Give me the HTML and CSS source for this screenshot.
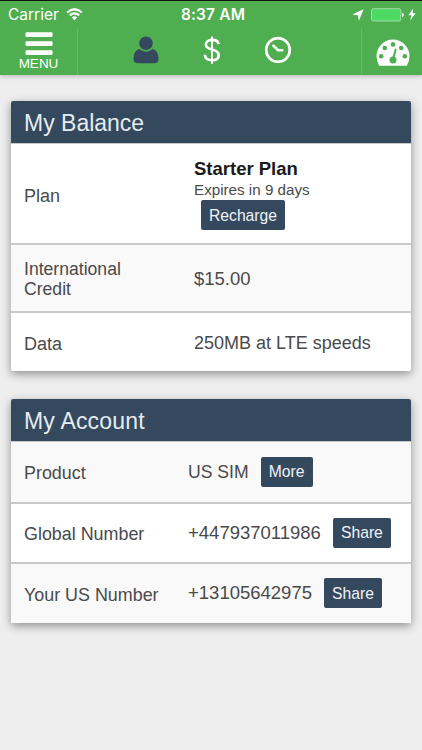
FILE: index.html
```html
<!DOCTYPE html>
<html lang="en">
<head>
    <meta charset="UTF-8">
    <meta name="viewport" content="width=device-width, initial-scale=1.0">
    <title>My Account</title>
    <link rel="stylesheet" href="styles.css">
</head>
<body>
    <header class="top-bar">
        <div class="status-bar">
            <div class="status-left">
                <span class="carrier">Carrier</span>
                <svg class="wifi" width="17" height="13" viewBox="0 0 17 13">
                    <path d="M1.2 4.5 Q8.5 -2 15.8 4.5" fill="none" stroke="#fff" stroke-width="2.2"/>
                    <path d="M3.8 7.4 Q8.5 3.2 13.2 7.4" fill="none" stroke="#fff" stroke-width="2.2"/>
                    <path d="M5.8 9.4 Q8.5 7 11.2 9.4 L8.5 12.2 Z" fill="#fff"/>
                </svg>
            </div>
            <span class="time">8:37 AM</span>
            <div class="status-right">
                <svg width="12" height="12" viewBox="0 0 12 12">
                    <path d="M11.6 .3 L6.9 11.8 L5.8 6.3 L.3 5.4 Z" fill="#fff"/>
                </svg>
                <svg class="battery" width="33" height="14" viewBox="0 0 33 14">
                    <rect x=".5" y=".7" width="29.3" height="12.3" rx="1.8" fill="#4cd964" stroke="#b5e3b9" stroke-width=".8"/>
                    <path d="M31 4.8 Q32.8 5.2 32.8 7 Q32.8 8.8 31 9.2 Z" fill="#fff"/>
                </svg>
                <svg class="bolt" width="8" height="13" viewBox="0 0 8 13">
                    <path d="M5.2 .5 L.3 7.2 H3.4 L2.2 12.5 L7.7 5.3 H4.5 Z" fill="#fff"/>
                </svg>
            </div>
        </div>
        <nav class="nav">
            <a class="menu">
                <svg width="28" height="24" viewBox="0 0 28 24">
                    <rect x=".5" y=".3" width="27" height="4.8" rx="1" fill="#fff"/>
                    <rect x=".5" y="9.3" width="27" height="4.8" rx="1" fill="#fff"/>
                    <rect x=".5" y="18.3" width="27" height="4.8" rx="1" fill="#fff"/>
                </svg>
                <span>MENU</span>
            </a>
            <div class="tabs">
                <a class="tab">
                    <svg width="26" height="28" viewBox="0 0 26 28">
                        <circle cx="13" cy="7.3" r="6.8" fill="#34495e"/>
                        <path d="M6.3 13.1 Q13 18.5 19.7 13.1 Q25.5 14.5 25.5 23 Q25.5 27.3 21 27.3 H5 Q.5 27.3 .5 23 Q.5 14.5 6.3 13.1 Z" fill="#34495e"/>
                    </svg>
                </a>
                <a class="tab">
                    <svg width="18" height="28" viewBox="0 0 18 28">
                        <path d="M15.6 8.2 C15.2 5.2 12.4 3.9 9 3.9 C5.2 3.9 2.9 5.9 2.9 8.6 C2.9 11.7 5.4 12.7 9 13.6 C13 14.6 15.7 15.8 15.7 19.2 C15.7 22.4 13 24.3 9 24.3 C5 24.3 2.1 22.3 1.9 18.8" fill="none" stroke="#fff" stroke-width="2.6"/>
                        <path d="M9 .5 V27.7" fill="none" stroke="#fff" stroke-width="2"/>
                    </svg>
                </a>
                <a class="tab">
                    <svg width="28" height="28" viewBox="0 0 28 28">
                        <circle cx="14" cy="14" r="11.8" fill="none" stroke="#fff" stroke-width="2.7"/>
                        <path d="M9.3 9.6 L14.2 14.2 H18.2" fill="none" stroke="#fff" stroke-width="2.6" stroke-linecap="round" stroke-linejoin="round"/>
                    </svg>
                </a>
            </div>
            <a class="dashboard">
                <svg width="34" height="28" viewBox="0 0 34 28">
                    <path d="M3.2 26.7 Q.5 22.3 .5 17.2 A16.5 16.7 0 0 1 33.5 17.2 Q33.5 22.3 30.8 26.7 Z" fill="#fff"/>
                    <g fill="#4fae50">
                        <circle cx="5.2" cy="17.2" r="2.3"/>
                        <circle cx="8.8" cy="9" r="2.3"/>
                        <circle cx="17" cy="5.4" r="2.3"/>
                        <circle cx="25.2" cy="9" r="2.3"/>
                        <circle cx="28.8" cy="17.2" r="2.3"/>
                        <circle cx="17" cy="21" r="3.5"/>
                    </g>
                    <path d="M17.2 20 L19.7 10.6" stroke="#4fae50" stroke-width="2" stroke-linecap="round"/>
                </svg>
            </a>
        </nav>
    </header>

    <main class="content">
        <section class="card balance">
            <h2>My Balance</h2>
            <div class="row row-plan">
                <div class="label">Plan</div>
                <div class="value">
                    <div class="plan-name">Starter Plan</div>
                    <div class="expires">Expires in 9 days</div>
                    <button type="button" class="btn btn-recharge">Recharge</button>
                </div>
            </div>
            <div class="row row-credit">
                <div class="label label-credit">International Credit</div>
                <div class="value credit">$15.00</div>
            </div>
            <div class="row row-data">
                <div class="label">Data</div>
                <div class="value data">250MB at LTE speeds</div>
            </div>
        </section>

        <section class="card account">
            <h2>My Account</h2>
            <div class="row">
                <div class="label product">Product</div>
                <div class="value"><span class="sim">US SIM</span><button type="button" class="btn btn-more">More</button></div>
            </div>
            <div class="row">
                <div class="label">Global Number</div>
                <div class="value"><span class="number">+447937011986</span><button type="button" class="btn btn-share">Share</button></div>
            </div>
            <div class="row">
                <div class="label us-number">Your US Number</div>
                <div class="value"><span class="number">+13105642975</span><button type="button" class="btn btn-share">Share</button></div>
            </div>
        </section>
    </main>
</body>
</html>
```
FILE: styles.css
```css
* {
    box-sizing: border-box;
}
body {
    font-family: 'Helvetica Neue', 'Liberation Sans', Arial, sans-serif;
    margin: 0;
    min-height: 750px;
    background-color: #eee;
    color: #4a4a4a;
}
svg {
    display: block;
}
.top-bar {
    height: 75px;
    background: #4fae50;
    border-top: 1px solid #111;
    box-shadow: 0 1px 5px rgba(0,0,0,0.25);
    color: #fff;
}
.status-bar {
    display: grid;
    grid-template-columns: 1fr auto 1fr;
    align-items: center;
    height: 27px;
    padding: 0 6px 0 8px;
    font-family: Inter, Roboto, sans-serif;
}
.status-left {
    display: flex;
    align-items: center;
    gap: 7px;
}
.carrier {
    font-size: 15.5px;
}
.time {
    font-weight: 600;
    font-size: 15.5px;
    letter-spacing: 0.15px;
    padding-left: 2px;
}
.status-right {
    display: flex;
    align-items: center;
    justify-content: flex-end;
}
.battery {
    margin-left: 7px;
}
.bolt {
    margin-left: 4px;
}
.nav {
    display: flex;
    height: 47px;
}
.menu {
    width: 78px;
    padding-top: 4px;
    border-right: 1px solid #65b966;
    display: flex;
    flex-direction: column;
    align-items: center;
}
.menu span {
    font-size: 13.5px;
    line-height: 15px;
}
.tabs {
    flex: 1;
    display: flex;
    padding-left: 35px;
}
.tab {
    width: 66px;
    height: 28px;
    margin-top: 8px;
    display: flex;
    justify-content: center;
}
.dashboard {
    width: 61px;
    padding: 11px 0 0 14px;
    border-left: 1px solid #65b966;
}
.content {
    padding: 26px 11px 0;
}
.card {
    margin-bottom: 28px;
    border-radius: 2px;
    background: #fff;
    box-shadow: 0 3px 10px rgba(0,0,0,0.4);
}
.card h2 {
    margin: 0;
    height: 42px;
    padding-left: 13px;
    border-radius: 2px 2px 0 0;
    background: #34495e;
    color: #e6ebf0;
    font-size: 23px;
    font-weight: normal;
    line-height: 45px;
}
.account h2 {
    letter-spacing: 0.2px;
}
.row {
    display: flex;
    align-items: center;
    height: 60.6px;
    padding-left: 13px;
    border-top: 2px solid #c8c8c8;
    font-size: 18px;
}
.card h2 + .row {
    border-top-width: 1px;
}
.label {
    width: 170px;
    line-height: 20px;
}
.row-plan {
    height: 100px;
}
.row-plan .label {
    padding-top: 4px;
}
.row-credit {
    height: 68px;
    background: #f9f9f9;
}
.row-data {
    height: 60px;
    padding-top: 3px;
}
.label-credit {
    padding: 2px 60px 0 0;
    font-size: 17.6px;
}
.credit {
    font-size: 18.5px;
    padding-top: 1px;
}
.plan-name {
    color: #1a1a1a;
    font-size: 18.5px;
    font-weight: bold;
    line-height: 21px;
    padding-top: 1px;
}
.expires {
    font-size: 15.2px;
    line-height: 21px;
}
.btn {
    height: 30px;
    padding: 1px 0 0;
    border: none;
    border-radius: 2px;
    background: #34495e;
    color: #f0f3f6;
    font-family: inherit;
    font-size: 15.7px;
    cursor: pointer;
}
.btn-recharge {
    display: block;
    width: 84px;
    margin-left: 7px;
}
.btn-more {
    width: 52px;
}
.btn-share {
    width: 58px;
}
.account .row:nth-child(even) {
    background: #f9f9f9;
}
.account .label {
    width: 164px;
    padding-top: 3px;
    font-size: 17.9px;
}
.account .value {
    display: flex;
    align-items: center;
    gap: 12px;
}
.sim, .number {
    line-height: 28px;
}
.sim {
    font-size: 17.6px;
}
.number {
    font-size: 18.5px;
}
```
